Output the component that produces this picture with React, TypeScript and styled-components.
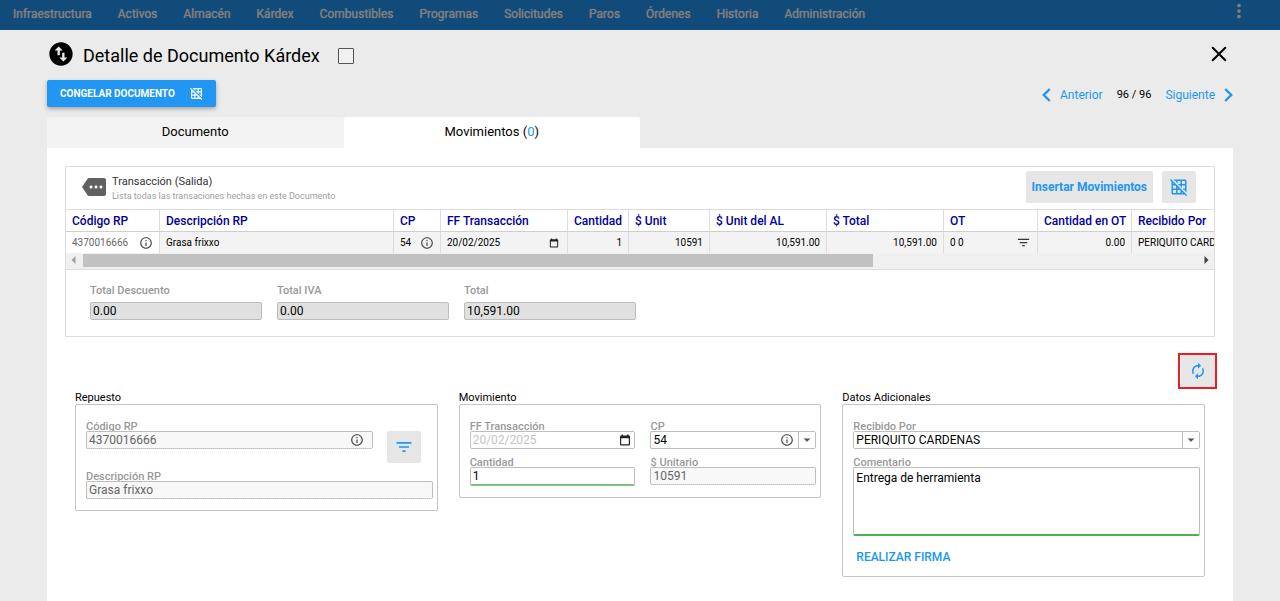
import React, { useState } from 'react';
import styled, { createGlobalStyle, css } from 'styled-components';
import {
  MdAutorenew,
  MdFilterList,
  MdGridOff,
  MdInfoOutline,
  MdMore,
  MdMoreVert,
  MdSwapVerticalCircle,
} from 'react-icons/md';

const blue = '#2196f3';
const line = '#dddddd';

const GlobalStyle = createGlobalStyle`
  *, *::before, *::after { box-sizing: border-box; }
  body {
    margin: 0;
    background: #ebebeb;
    color: #000;
    font-family: Roboto, "Liberation Sans", sans-serif;
    font-size: 12px;
  }
  button, input, select, textarea { font: inherit; color: inherit; }
  button { cursor: pointer; }
  svg { display: block; flex: none; }
`;

const Page = styled.div`
  min-height: 100vh;
  display: flex;
  flex-direction: column;
`;

const NavBar = styled.nav`
  height: 30px;
  padding-right: 30px;
  display: flex;
  align-items: flex-start;
  justify-content: space-between;
  background: #114b79;
  color: #808080;
`;

const NavLinks = styled.div`
  display: flex;
  gap: 26px;
  padding-left: 13px;
`;

const NavLink = styled.a`
  color: inherit;
  line-height: 28px;
  text-decoration: none;
  text-shadow: 0 0 1px currentColor;
`;

const PlainButton = styled.button`
  display: flex;
  align-items: center;
  padding: 0;
  border: 0;
  background: none;
`;

const Main = styled.main`
  flex: 1;
  display: flex;
  flex-direction: column;
  padding: 10px 47px 0;
`;

const TitleBar = styled.header`
  height: 31px;
  display: flex;
  align-items: flex-start;
  gap: 8px;
`;

const Title = styled.h1`
  margin: 0;
  font-size: 18px;
  font-weight: 400;
  line-height: 32px;
`;

const TitleCheck = styled.input`
  appearance: none;
  width: 16px;
  height: 16px;
  margin: 8px auto 0 10px;
  border: 1px solid #555;
  border-radius: 1px;
  background: #f0f0f0;
`;

const CloseButton = styled(PlainButton)`
  padding: 6px;
`;

const ActionBar = styled.div`
  display: flex;
  align-items: center;
  justify-content: space-between;
  margin-top: 9px;
`;

const FreezeButton = styled.button`
  display: flex;
  align-items: center;
  gap: 15px;
  height: 27px;
  padding: 0 13px;
  border: 0;
  border-radius: 2px;
  background: ${blue};
  color: #fff;
  font-size: 10px;
  font-weight: 700;
  text-transform: uppercase;
  box-shadow: 0 2px 4px rgba(0, 0, 0, 0.3);
`;

const Pager = styled.div`
  display: flex;
  align-items: center;
  gap: 14px;
  margin-top: 3px;
  font-size: 11px;
  line-height: 14px;
`;

const PagerButton = styled(PlainButton)`
  gap: 9px;
  color: ${blue};
  font-size: 12px;
`;

const Tabs = styled.div`
  display: flex;
  margin-top: 10px;
`;

const Tab = styled.button<{ $active?: boolean }>`
  width: 25%;
  height: 31px;
  padding: 0 0 2px;
  border: 0;
  border-radius: 2px 2px 0 0;
  background: ${(p) => (p.$active ? '#fff' : '#f3f3f3')};
  font-size: 13px;
  line-height: 14px;
`;

const Count = styled.span`
  color: ${blue};
`;

const Sheet = styled.section`
  flex: 1;
  padding: 18px 18px 24px;
  border-radius: 0 2px 0 0;
  background: #fff;
`;

const Panel = styled.section`
  border: 1px solid ${line};
`;

const PanelHead = styled.header`
  display: flex;
  align-items: center;
  height: 42px;
  padding: 0 18px 2px 16px;
`;

const PanelTitles = styled.div`
  display: flex;
  flex-direction: column;
  gap: 1px;
  margin: 2px auto 0 6px;
`;

const PanelTools = styled.div`
  display: flex;
  gap: 9px;
`;

const PanelTitle = styled.h2`
  margin: 0;
  color: #333;
  font-size: 11px;
  font-weight: 400;
  line-height: 14px;
`;

const PanelHint = styled.p`
  margin: 0;
  color: #9e9e9e;
  font-size: 9px;
  line-height: 12px;
`;

const SoftButton = styled.button<{ $icon?: boolean }>`
  display: flex;
  align-items: center;
  justify-content: center;
  height: 32px;
  width: ${(p) => (p.$icon ? '34px' : 'auto')};
  padding: 0 ${(p) => (p.$icon ? '0' : '6px')};
  flex: none;
  border: 0;
  border-radius: 2px;
  background: #e6e6e6;
  color: ${blue};
  font-weight: 700;
`;

const TableView = styled.div`
  overflow: hidden;
  border-top: 1px solid ${line};
`;

const Table = styled.table`
  width: 1400px;
  border-collapse: separate;
  border-spacing: 0;
  table-layout: fixed;
`;

const HeadCell = styled.th<{ $right?: boolean }>`
  height: 22px;
  padding: 0 6px;
  border-right: 1px solid ${line};
  border-bottom: 1px solid #cfcfcf;
  color: #000099;
  font-weight: 500;
  line-height: 14px;
  text-align: ${(p) => (p.$right ? 'right' : 'left')};
  white-space: nowrap;
`;

const Cell = styled.td<{ $right?: boolean; $plain?: boolean }>`
  height: 21px;
  padding: 0 6px;
  border-right: 1px solid ${line};
  background: ${(p) => (p.$plain ? '#fff' : '#f3f3f3')};
  color: ${(p) => (p.$plain ? '#666' : '#000')};
  font-size: 10px;
  line-height: 14px;
  text-align: ${(p) => (p.$right ? 'right' : 'left')};
  white-space: nowrap;
`;

const CellRow = styled.div`
  display: flex;
  align-items: center;
  justify-content: space-between;
`;

const InfoIcon = styled(MdInfoOutline)`
  width: 14px;
  height: 14px;
  color: #444;
`;

const ScrollTrack = styled.div`
  display: flex;
  align-items: center;
  height: 17px;
  padding: 0 5px 2px;
  border-bottom: 1px solid ${line};
  background: #f0f0f0;
`;

const ScrollRail = styled.div`
  flex: 1;
  padding: 0 8px 0 7px;
`;

const ScrollThumb = styled.div`
  width: 71%;
  height: 13px;
  background: #c1c1c1;
`;

const Totals = styled.div`
  display: flex;
  gap: 15px;
  padding: 15px 24px 16px;
`;

const TotalField = styled.label`
  display: flex;
  flex-direction: column;
  gap: 5px;
  width: 172px;
  color: #999;
  font-size: 11px;
  font-weight: 500;
  line-height: 12px;
`;

const TotalInput = styled.input`
  height: 18px;
  width: 100%;
  padding: 0 2px;
  border: 1px solid #bdbdbd;
  border-radius: 2px;
  background: #e0e0e0;
  color: #000;
  font-size: 12px;
  font-weight: 400;
`;

const RefreshBar = styled.div`
  display: flex;
  justify-content: flex-end;
  margin-top: 18px;
`;

const Highlight = styled.div`
  padding-left: 1px;
  outline: 2px solid #ed1c24;
`;

const Groups = styled.div`
  display: grid;
  grid-template-columns: repeat(3, minmax(0, 1fr));
  align-items: start;
  gap: 21px;
  margin: 4px 10px 0;
`;

const Group = styled.fieldset`
  min-width: 0;
  margin: 0;
  padding: 0;
  border: 0;
`;

const GroupTitle = styled.legend`
  padding: 0;
  font-size: 11px;
  line-height: 13px;
`;

const GroupBox = styled.div<{ $columns?: number }>`
  display: grid;
  grid-template-columns: repeat(${(p) => p.$columns ?? 1}, minmax(0, 1fr));
  gap: 8px 15px;
  padding: 16px 4px 11px 10px;
  border: 1px solid #c4c4c4;
  border-radius: 2px;
`;

const FieldBlock = styled.div`
  display: flex;
  flex-direction: column;
`;

const FieldLabel = styled.label`
  height: 10px;
  color: #999;
  font-size: 11px;
  font-weight: 500;
  line-height: 12px;
`;

const FieldRow = styled.div`
  display: flex;
  align-items: flex-start;
  gap: 14px;
  padding-right: 12px;
`;

type Look = 'normal' | 'locked' | 'changed' | 'faded';

const Control = styled.div<{ $look?: Look }>`
  flex: 1 0 auto;
  display: flex;
  align-items: center;
  height: 18px;
  max-height: 18px;
  border: 1px solid #bdbdbd;
  border-radius: 2px;
  background: #fff;
  color: #000;
  ${(p) =>
    p.$look === 'locked' &&
    css`
      border-bottom: 1px dotted #999;
      background: #f8f8f8;
      color: #666;
    `}
  ${(p) =>
    p.$look === 'changed' &&
    css`
      height: 19px;
      max-height: 19px;
      border-bottom: 2px solid #7fbf82;
    `}
  ${(p) =>
    p.$look === 'faded' &&
    css`
      color: #c4c4c4;
    `}
`;

const TextInput = styled.input`
  flex: 1;
  min-width: 0;
  height: 16px;
  padding: 0 2px;
  border: 0;
  outline: 0;
  background: none;
`;

const IconSlot = styled.span<{ $gap: number }>`
  margin-right: ${(p) => p.$gap}px;
  color: #222;
`;

const DropButton = styled.button`
  display: flex;
  align-items: center;
  justify-content: center;
  width: 17px;
  height: 16px;
  padding: 0;
  border: 0;
  border-left: 1px solid #bdbdbd;
  background: #fff;
  color: #555;
`;

const Comment = styled.textarea`
  display: block;
  width: 100%;
  height: 69px;
  padding: 3px 2px;
  border: 1px solid #bdbdbd;
  border-bottom: 2px solid #4caf50;
  border-radius: 2px;
  line-height: 14px;
  resize: none;
  outline: 0;
`;

const SignButton = styled(PlainButton)`
  justify-self: start;
  margin-top: 6px;
  padding: 0 3px;
  color: ${blue};
  font-weight: 500;
  line-height: 15px;
`;

const Chevron = ({ next }: { next?: boolean }) => (
  <svg width="9" height="14" viewBox="0 0 9 14" fill="none" stroke="currentColor" strokeWidth="2.4">
    <path d={next ? 'M1.2 1l6 6-6 6' : 'M7.8 1l-6 6 6 6'} />
  </svg>
);

const CloseIcon = () => (
  <svg width="16" height="16" viewBox="0 0 16 16" stroke="#000" strokeWidth="2" strokeLinecap="round">
    <path d="M1.7 1.7l12.6 12.6M14.3 1.7L1.7 14.3" />
  </svg>
);

const CalendarIcon = ({ size }: { size: number }) => (
  <svg width={size} height={size} viewBox="0 0 12 12">
    <path
      fill="currentColor"
      fillRule="evenodd"
      d="M2.5 0.5h1.5v1h4v-1h1.500v1h0.500a1 1 0 0 1 1 1v8a1 1 0 0 1-1 1h-8a1 1 0 0 1-1-1v-8a1 1 0 0 1 1-1h0.500zM2.200 4.200v6h7.600v-6z"
    />
  </svg>
);

const DropArrow = () => (
  <svg width="8" height="4" viewBox="0 0 8 4">
    <path fill="currentColor" d="M0.500 0.500h7L4 3.800z" />
  </svg>
);

const ScrollArrow = ({ right }: { right?: boolean }) => (
  <svg width="5" height="8" viewBox="0 0 5 8">
    <path fill={right ? '#404040' : '#a0a0a0'} d={right ? 'M0.500 0v8l4-4z' : 'M4.500 0v8l-4-4z'} />
  </svg>
);

const sections = [
  'Infraestructura',
  'Activos',
  'Almacén',
  'Kárdex',
  'Combustibles',
  'Programas',
  'Solicitudes',
  'Paros',
  'Órdenes',
  'Historia',
  'Administración',
];

const columns: { name: string; width: number; right?: boolean }[] = [
  { name: 'Código RP', width: 94 },
  { name: 'Descripción RP', width: 234 },
  { name: 'CP', width: 47 },
  { name: 'FF Transacción', width: 127 },
  { name: 'Cantidad', width: 61, right: true },
  { name: '$ Unit', width: 81 },
  { name: '$ Unit del AL', width: 117 },
  { name: '$ Total', width: 117 },
  { name: 'OT', width: 94 },
  { name: 'Cantidad en OT', width: 94, right: true },
  { name: 'Recibido Por', width: 334 },
];

const totals = [
  { name: 'Total Descuento', value: '0.00' },
  { name: 'Total IVA', value: '0.00' },
  { name: 'Total', value: '10,591.00' },
];

type FieldProps = {
  id: string;
  label: string;
  value: string;
  look?: Look;
  children?: React.ReactNode;
};

function FieldControl({ id, value, look, children }: Omit<FieldProps, 'label'>) {
  return (
    <Control $look={look}>
      <TextInput id={id} defaultValue={value} readOnly={look === 'locked'} />
      {children}
    </Control>
  );
}

function Field({ label, ...rest }: FieldProps) {
  return (
    <FieldBlock>
      <FieldLabel htmlFor={rest.id}>{label}</FieldLabel>
      <FieldControl {...rest} />
    </FieldBlock>
  );
}

export default function App() {
  const [tab, setTab] = useState('movimientos');

  return (
    <Page>
      <GlobalStyle />
      <NavBar>
        <NavLinks>
          {sections.map((s) => (
            <NavLink key={s} href="#">
              {s}
            </NavLink>
          ))}
        </NavLinks>
        <PlainButton aria-label="Más opciones">
          <MdMoreVert size={22} />
        </PlainButton>
      </NavBar>

      <Main>
        <TitleBar>
          <MdSwapVerticalCircle size={28} />
          <Title>Detalle de Documento Kárdex</Title>
          <TitleCheck type="checkbox" aria-label="Seleccionar documento" />
          <CloseButton aria-label="Cerrar">
            <CloseIcon />
          </CloseButton>
        </TitleBar>

        <ActionBar>
          <FreezeButton>
            Congelar documento
            <MdGridOff size={13} />
          </FreezeButton>
          <Pager>
            <PagerButton>
              <Chevron />
              Anterior
            </PagerButton>
            <span>96 / 96</span>
            <PagerButton>
              Siguiente
              <Chevron next />
            </PagerButton>
          </Pager>
        </ActionBar>

        <Tabs role="tablist">
          <Tab role="tab" $active={tab === 'documento'} onClick={() => setTab('documento')}>
            Documento
          </Tab>
          <Tab role="tab" $active={tab === 'movimientos'} onClick={() => setTab('movimientos')}>
            Movimientos (<Count>0</Count>)
          </Tab>
        </Tabs>

        <Sheet>
          <Panel>
            <PanelHead>
              <MdMore size={24} color="#616161" />
              <PanelTitles>
                <PanelTitle>Transacción (Salida)</PanelTitle>
                <PanelHint>Lista todas las transaciones hechas en este Documento</PanelHint>
              </PanelTitles>
              <PanelTools>
                <SoftButton>Insertar Movimientos</SoftButton>
                <SoftButton $icon aria-label="Ocultar cuadrícula">
                  <MdGridOff size={18} />
                </SoftButton>
              </PanelTools>
            </PanelHead>

            <TableView>
              <Table>
                <colgroup>
                  {columns.map((c) => (
                    <col key={c.name} width={c.width} />
                  ))}
                </colgroup>
                <thead>
                  <tr>
                    {columns.map((c) => (
                      <HeadCell key={c.name} $right={c.right} scope="col">
                        {c.name}
                      </HeadCell>
                    ))}
                  </tr>
                </thead>
                <tbody>
                  <tr>
                    <Cell $plain>
                      <CellRow>
                        4370016666 <InfoIcon />
                      </CellRow>
                    </Cell>
                    <Cell>Grasa frixxo</Cell>
                    <Cell>
                      <CellRow>
                        54 <InfoIcon />
                      </CellRow>
                    </Cell>
                    <Cell>
                      <CellRow>
                        20/02/2025
                        <IconSlot $gap={2}>
                          <CalendarIcon size={10} />
                        </IconSlot>
                      </CellRow>
                    </Cell>
                    <Cell $right>1</Cell>
                    <Cell $right>10591</Cell>
                    <Cell $right>10,591.00</Cell>
                    <Cell $right>10,591.00</Cell>
                    <Cell>
                      <CellRow>
                        0 0 <MdFilterList size={15} color="#333" />
                      </CellRow>
                    </Cell>
                    <Cell $right>0.00</Cell>
                    <Cell>PERIQUITO CARDENAS</Cell>
                  </tr>
                </tbody>
              </Table>
              <ScrollTrack aria-hidden="true">
                <ScrollArrow />
                <ScrollRail>
                  <ScrollThumb />
                </ScrollRail>
                <ScrollArrow right />
              </ScrollTrack>
            </TableView>

            <Totals>
              {totals.map((t) => (
                <TotalField key={t.name}>
                  {t.name}
                  <TotalInput defaultValue={t.value} readOnly />
                </TotalField>
              ))}
            </Totals>
          </Panel>

          <RefreshBar>
            <Highlight>
              <SoftButton $icon aria-label="Actualizar">
                <MdAutorenew size={18} />
              </SoftButton>
            </Highlight>
          </RefreshBar>

          <Groups>
            <Group>
              <GroupTitle>Repuesto</GroupTitle>
              <GroupBox>
                <FieldBlock>
                  <FieldLabel htmlFor="codigo">Código RP</FieldLabel>
                  <FieldRow>
                    <FieldControl id="codigo" value="4370016666" look="locked">
                      <IconSlot $gap={8}>
                        <InfoIcon />
                      </IconSlot>
                    </FieldControl>
                    <SoftButton $icon aria-label="Filtrar repuestos">
                      <MdFilterList size={20} />
                    </SoftButton>
                  </FieldRow>
                </FieldBlock>
                <Field id="descripcion" label="Descripción RP" value="Grasa frixxo" look="locked" />
              </GroupBox>
            </Group>

            <Group>
              <GroupTitle>Movimiento</GroupTitle>
              <GroupBox $columns={2}>
                <Field id="fecha" label="FF Transacción" value="20/02/2025" look="faded">
                  <IconSlot $gap={3}>
                    <CalendarIcon size={12} />
                  </IconSlot>
                </Field>
                <Field id="cp" label="CP" value="54">
                  <IconSlot $gap={4}>
                    <InfoIcon />
                  </IconSlot>
                  <DropButton aria-label="Elegir CP">
                    <DropArrow />
                  </DropButton>
                </Field>
                <Field id="cantidad" label="Cantidad" value="1" look="changed" />
                <Field id="unitario" label="$ Unitario" value="10591" look="locked" />
              </GroupBox>
            </Group>

            <Group>
              <GroupTitle>Datos Adicionales</GroupTitle>
              <GroupBox>
                <Field id="recibido" label="Recibido Por" value="PERIQUITO CARDENAS">
                  <DropButton aria-label="Elegir quién recibe">
                    <DropArrow />
                  </DropButton>
                </Field>
                <FieldBlock>
                  <FieldLabel htmlFor="comentario">Comentario</FieldLabel>
                  <Comment id="comentario" defaultValue="Entrega de herramienta" />
                </FieldBlock>
                <SignButton>REALIZAR FIRMA</SignButton>
              </GroupBox>
            </Group>
          </Groups>
        </Sheet>
      </Main>
    </Page>
  );
}
